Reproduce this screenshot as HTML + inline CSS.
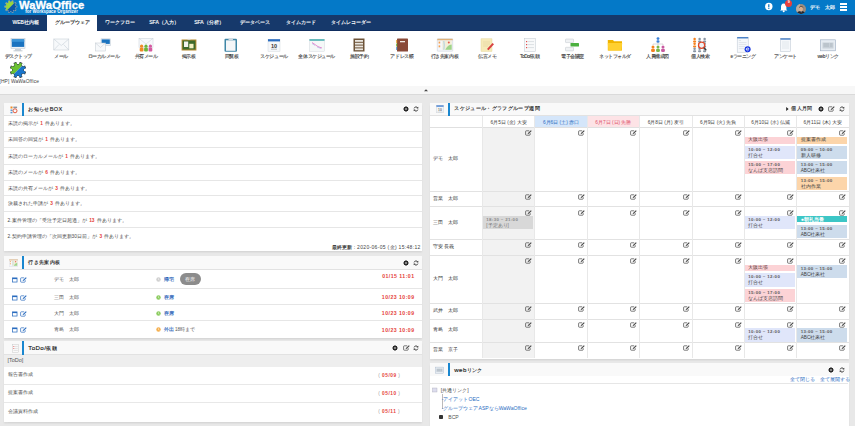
<!DOCTYPE html><html><head><meta charset="utf-8"><style>
*{margin:0;padding:0;box-sizing:border-box}
html,body{width:855px;height:426px;overflow:hidden;background:#e8e8e8;font-family:"Liberation Sans", sans-serif;color:#333}
.ab{position:absolute}
.t{position:absolute;white-space:nowrap;line-height:1}
#hdr{left:0;top:0;width:855px;height:14.8px;background:#0479c8}
#nav{left:0;top:14.8px;width:855px;height:15.9px;background:#16396b;box-shadow:inset 0 -0.9px 0 #0f2d5e}
#icons{left:0;top:30.7px;width:855px;height:55.7px;background:#fff}
#strip{left:0;top:86.4px;width:855px;height:8.2px;background:#f7f7f7;border-bottom:0.9px solid #dadada}
.panel{position:absolute;background:#fff;box-shadow:0 1.6px 1.6px rgba(0,0,0,.07)}
.ph{position:absolute;left:0;top:0;right:0;background:#f9f9f9;border-bottom:0.8px solid #e2e2e2}
.bar{position:absolute;width:2px;background:#1a87cf}
.ptitle{position:absolute;font-size:5.4px;font-weight:normal;color:#1a1a1a;-webkit-text-stroke:0.14px #1a1a1a;letter-spacing:0.35px;white-space:nowrap;line-height:1}
.row{position:absolute;left:0;right:0;border-bottom:1.1px solid #e6e6e6}
.rt{position:absolute;font-size:4.8px;color:#555;white-space:nowrap;line-height:1}
.red{color:#e5413b;font-weight:bold}
.ev{position:absolute;font-size:4.7px;color:#3a3a3a;line-height:1;overflow:hidden;white-space:nowrap}
.ev b{display:block;font-size:4.4px;font-weight:bold;color:#555;letter-spacing:0.35px}
</style></head><body>
<div id="hdr" class="ab"></div>
<svg class="ab" style="left:4px;top:-0.2px" width="14" height="13.5" viewBox="0 0 14 13.5"><defs><clipPath id="cg1"><path d="M-8,-8 L8,-8 L-8,8 Z"/></clipPath><clipPath id="cg2"><path d="M8,-8 L8,8 L-8,8 Z"/></clipPath></defs>
<g transform="translate(6.8,6.6)"><g fill="#8e9aa6" transform="scale(1.05)"><circle r="4.9"/><rect x="-0.9" y="-6.2" width="1.8" height="2.6" transform="rotate(18)"/><rect x="-0.9" y="-6.2" width="1.8" height="2.6" transform="rotate(54)"/><rect x="-0.9" y="-6.2" width="1.8" height="2.6" transform="rotate(90)"/><rect x="-0.9" y="-6.2" width="1.8" height="2.6" transform="rotate(126)"/><rect x="-0.9" y="-6.2" width="1.8" height="2.6" transform="rotate(162)"/><rect x="-0.9" y="-6.2" width="1.8" height="2.6" transform="rotate(198)"/><rect x="-0.9" y="-6.2" width="1.8" height="2.6" transform="rotate(234)"/><rect x="-0.9" y="-6.2" width="1.8" height="2.6" transform="rotate(270)"/><rect x="-0.9" y="-6.2" width="1.8" height="2.6" transform="rotate(306)"/><rect x="-0.9" y="-6.2" width="1.8" height="2.6" transform="rotate(342)"/></g><g fill="#96d63c" clip-path="url(#cg1)" transform="scale(0.9)"><circle r="4.9"/><rect x="-0.9" y="-6.2" width="1.8" height="2.6" transform="rotate(18)"/><rect x="-0.9" y="-6.2" width="1.8" height="2.6" transform="rotate(54)"/><rect x="-0.9" y="-6.2" width="1.8" height="2.6" transform="rotate(90)"/><rect x="-0.9" y="-6.2" width="1.8" height="2.6" transform="rotate(126)"/><rect x="-0.9" y="-6.2" width="1.8" height="2.6" transform="rotate(162)"/><rect x="-0.9" y="-6.2" width="1.8" height="2.6" transform="rotate(198)"/><rect x="-0.9" y="-6.2" width="1.8" height="2.6" transform="rotate(234)"/><rect x="-0.9" y="-6.2" width="1.8" height="2.6" transform="rotate(270)"/><rect x="-0.9" y="-6.2" width="1.8" height="2.6" transform="rotate(306)"/><rect x="-0.9" y="-6.2" width="1.8" height="2.6" transform="rotate(342)"/></g><g fill="#0c56a8" clip-path="url(#cg2)" transform="scale(0.9)"><circle r="4.9"/><rect x="-0.9" y="-6.2" width="1.8" height="2.6" transform="rotate(18)"/><rect x="-0.9" y="-6.2" width="1.8" height="2.6" transform="rotate(54)"/><rect x="-0.9" y="-6.2" width="1.8" height="2.6" transform="rotate(90)"/><rect x="-0.9" y="-6.2" width="1.8" height="2.6" transform="rotate(126)"/><rect x="-0.9" y="-6.2" width="1.8" height="2.6" transform="rotate(162)"/><rect x="-0.9" y="-6.2" width="1.8" height="2.6" transform="rotate(198)"/><rect x="-0.9" y="-6.2" width="1.8" height="2.6" transform="rotate(234)"/><rect x="-0.9" y="-6.2" width="1.8" height="2.6" transform="rotate(270)"/><rect x="-0.9" y="-6.2" width="1.8" height="2.6" transform="rotate(306)"/><rect x="-0.9" y="-6.2" width="1.8" height="2.6" transform="rotate(342)"/></g></g></svg>
<div class="t" style="left:19px;top:0.2px;font-size:11.2px;font-weight:bold;color:#fff;letter-spacing:0.1px;-webkit-text-stroke:0.35px #fff">WaWaOffice</div>
<div class="t" style="left:25.3px;top:9.6px;font-size:4.45px;font-weight:bold;color:#fff">for Workspace Organizer</div>
<svg class="ab" style="left:764px;top:2px" width="10" height="10" viewBox="0 0 10 10"><circle cx="4.8" cy="4.5" r="3.7" fill="#fff"/><rect x="4.2" y="2.2" width="1.2" height="3" fill="#0b72bd"/><rect x="4.2" y="5.8" width="1.2" height="1.1" fill="#0b72bd"/></svg>
<svg class="ab" style="left:779px;top:1px" width="12" height="12" viewBox="0 0 12 12"><path d="M4.7,2.5 C2.6,2.5 2,4.5 2,6 L2,8.5 L1,9.6 L8.4,9.6 L7.4,8.5 L7.4,6 C7.4,4.5 6.8,2.5 4.7,2.5 Z" fill="#fff"/><circle cx="4.7" cy="10.3" r="1" fill="#fff"/></svg>
<div class="ab" style="left:785.4px;top:-0.4px;width:7px;height:7px;border-radius:50%;background:#e8403c"></div>
<div class="t" style="left:787.8px;top:1.3px;font-size:3.8px;font-weight:bold;color:#fff">9</div>
<svg class="ab" style="left:795.6px;top:3.8px" width="10" height="10" viewBox="0 0 10 10"><defs><clipPath id="av"><circle cx="5" cy="5" r="5"/></clipPath></defs><g clip-path="url(#av)"><rect width="10" height="10" fill="#9a8c80"/><rect x="0" y="0" width="4" height="10" fill="#b8aca0"/><ellipse cx="5.1" cy="4.9" rx="1.9" ry="2.4" fill="#d8b090"/><path d="M2.9,4.6 C2.6,1.6 7.6,1.4 7.3,4.6 L6.9,3.4 C6,2.6 4.2,2.6 3.3,3.4 Z" fill="#1e1812"/><path d="M0.5,10 C1,7.6 3,7.2 5,7.3 C7,7.2 9,7.6 9.5,10 Z" fill="#22242a"/><path d="M4.5,7.3 L5.1,8.8 L5.7,7.3 Z" fill="#ddd"/></g></svg>
<div class="t" style="left:810px;top:5.3px;font-size:5.1px;color:#fff;-webkit-text-stroke:0.15px #fff">デモ</div>
<div class="t" style="left:825px;top:5.3px;font-size:5.1px;color:#fff;-webkit-text-stroke:0.15px #fff">太郎</div>
<div class="ab" style="left:840px;top:3.4px;width:7.4px;height:1.5px;background:#fff"></div>
<div class="ab" style="left:840px;top:6.2px;width:7.4px;height:1.5px;background:#fff"></div>
<div class="ab" style="left:840px;top:9px;width:7.4px;height:1.5px;background:#fff"></div>
<div id="nav" class="ab"></div>
<div class="ab" style="left:47px;top:14.6px;width:50.4px;height:17px;background:#fff"></div>
<div class="t" style="left:-14.3px;width:80px;text-align:center;top:20.4px;font-size:5px;color:#fff;-webkit-text-stroke:0.15px #fff">WEB社内報</div>
<div class="t" style="left:32px;width:80px;text-align:center;top:20.4px;font-size:5px;color:#2a2a2a;-webkit-text-stroke:0.15px #2a2a2a">グループウェア</div>
<div class="t" style="left:79.8px;width:80px;text-align:center;top:20.4px;font-size:5px;color:#fff;-webkit-text-stroke:0.15px #fff">ワークフロー</div>
<div class="t" style="left:124px;width:80px;text-align:center;top:20.4px;font-size:5px;color:#fff;-webkit-text-stroke:0.15px #fff">SFA（入力）</div>
<div class="t" style="left:168.9px;width:80px;text-align:center;top:20.4px;font-size:5px;color:#fff;-webkit-text-stroke:0.15px #fff">SFA（分析）</div>
<div class="t" style="left:215.2px;width:80px;text-align:center;top:20.4px;font-size:5px;color:#fff;-webkit-text-stroke:0.15px #fff">データベース</div>
<div class="t" style="left:261.2px;width:80px;text-align:center;top:20.4px;font-size:5px;color:#fff;-webkit-text-stroke:0.15px #fff">タイムカード</div>
<div class="t" style="left:311.4px;width:80px;text-align:center;top:20.4px;font-size:5px;color:#fff;-webkit-text-stroke:0.15px #fff">タイムレコーダー</div>
<div id="icons" class="ab"></div>
<div id="strip" class="ab"></div>
<svg class="ab" style="left:424px;top:89.2px" width="4" height="2.4" viewBox="0 0 4 2.4"><path d="M0,2.2 L2,0.2 L4,2.2 Z" fill="#444"/></svg>
<svg class="ab" style="left:10.20px;top:38px;overflow:visible" width="16" height="14" viewBox="0 0 16 14"><rect x="1" y="0.5" width="14" height="10" fill="#eef3f8" stroke="#b8c4d0" stroke-width="0.5"/><rect x="1.8" y="1.3" width="12.4" height="7.6" fill="#1a73c0"/><rect x="1.8" y="1.3" width="12.4" height="2.5" fill="#3a94d8"/><rect x="5" y="11" width="6" height="1.6" fill="#c9d2da"/><rect x="3.5" y="12.4" width="9" height="0.9" fill="#b9c2ca"/></svg>
<div class="t" style="left:-11.80px;width:60px;text-align:center;top:54.5px;font-size:4.8px;letter-spacing:-0.45px;color:#3a3a3a;-webkit-text-stroke:0.1px #3a3a3a">デスクトップ</div>
<svg class="ab" style="left:52.83px;top:38px;overflow:visible" width="16" height="14" viewBox="0 0 16 14"><rect x="0.8" y="1" width="15" height="11" fill="#f7f9fb" stroke="#c8d0d8" stroke-width="0.6"/><path d="M0.8,1 L8.3,7.5 L15.8,1 M0.8,12 L6,6.5 M15.8,12 L10.6,6.5" fill="none" stroke="#c8d0d8" stroke-width="0.6"/></svg>
<div class="t" style="left:30.83px;width:60px;text-align:center;top:54.5px;font-size:4.8px;letter-spacing:-0.45px;color:#3a3a3a;-webkit-text-stroke:0.1px #3a3a3a">メール</div>
<svg class="ab" style="left:95.46px;top:38px;overflow:visible" width="16" height="14" viewBox="0 0 16 14"><rect x="6" y="0.8" width="9.5" height="7" fill="#e8eef4" stroke="#b8c4d0" stroke-width="0.4"/><rect x="6.7" y="1.4" width="8.1" height="4.5" fill="#1a73c0"/><rect x="0.5" y="5" width="10" height="8" fill="#f7f9fb" stroke="#c0c8d0" stroke-width="0.5"/><path d="M0.5,5 L5.5,9.5 L10.5,5" fill="none" stroke="#c0c8d0" stroke-width="0.5"/></svg>
<div class="t" style="left:73.46px;width:60px;text-align:center;top:54.5px;font-size:4.8px;letter-spacing:-0.45px;color:#3a3a3a;-webkit-text-stroke:0.1px #3a3a3a">ローカルメール</div>
<svg class="ab" style="left:138.09px;top:38px;overflow:visible" width="16" height="14" viewBox="0 0 16 14"><rect x="1" y="0.3" width="14" height="9" fill="#f7f9fb" stroke="#c8d0d8" stroke-width="0.5"/><path d="M1,0.3 L8,6 L15,0.3" fill="none" stroke="#c8d0d8" stroke-width="0.5"/><circle cx="3.6" cy="8.2" r="1.6" fill="#f08a24"/><rect x="1.7" y="9.8" width="3.8" height="3.8" rx="1" fill="#f08a24"/><circle cx="8" cy="8.2" r="1.6" fill="#6cb43a"/><rect x="6.1" y="9.8" width="3.8" height="3.8" rx="1" fill="#6cb43a"/><circle cx="12.4" cy="8.2" r="1.6" fill="#d45aa0"/><rect x="10.5" y="9.8" width="3.8" height="3.8" rx="1" fill="#d45aa0"/></svg>
<div class="t" style="left:116.09px;width:60px;text-align:center;top:54.5px;font-size:4.8px;letter-spacing:-0.45px;color:#3a3a3a;-webkit-text-stroke:0.1px #3a3a3a">共有メール</div>
<svg class="ab" style="left:180.72px;top:38px;overflow:visible" width="16" height="14" viewBox="0 0 16 14"><rect x="0.6" y="1.5" width="14.8" height="11" fill="#b58a2e"/><rect x="1.6" y="2.5" width="12.8" height="9" fill="#3e6a2a"/><rect x="3" y="3.5" width="4.2" height="5.5" fill="#f4f4ee"/><rect x="8.3" y="5.8" width="4.2" height="4.5" fill="#f3f0c0"/><rect x="6.5" y="0.8" width="3" height="1" fill="#ddd"/></svg>
<div class="t" style="left:158.72px;width:60px;text-align:center;top:54.5px;font-size:4.8px;letter-spacing:-0.45px;color:#3a3a3a;-webkit-text-stroke:0.1px #3a3a3a">掲示板</div>
<svg class="ab" style="left:223.35px;top:38px;overflow:visible" width="16" height="14" viewBox="0 0 16 14"><rect x="1.5" y="0.8" width="12.5" height="13" rx="1" fill="#3f86a6"/><rect x="3" y="2.3" width="9.5" height="10.5" fill="#f4f6f8"/><rect x="5.5" y="0.3" width="4.5" height="1.8" rx="0.5" fill="#d0d8e0"/></svg>
<div class="t" style="left:201.35px;width:60px;text-align:center;top:54.5px;font-size:4.8px;letter-spacing:-0.45px;color:#3a3a3a;-webkit-text-stroke:0.1px #3a3a3a">回覧板</div>
<svg class="ab" style="left:265.98px;top:38px;overflow:visible" width="16" height="14" viewBox="0 0 16 14"><rect x="2" y="1.2" width="12" height="12" fill="#f5f7fa" stroke="#c8d0d8" stroke-width="0.4"/><rect x="2" y="1.2" width="12" height="2.2" fill="#2a6cbf"/><text x="8" y="9.6" font-size="5.5" font-weight="bold" text-anchor="middle" fill="#333" font-family="Liberation Sans">10</text><rect x="5" y="10.8" width="6" height="0.6" fill="#999"/></svg>
<div class="t" style="left:243.98px;width:60px;text-align:center;top:54.5px;font-size:4.8px;letter-spacing:-0.45px;color:#3a3a3a;-webkit-text-stroke:0.1px #3a3a3a">スケジュール</div>
<svg class="ab" style="left:308.61px;top:38px;overflow:visible" width="16" height="14" viewBox="0 0 16 14"><rect x="0.5" y="1.2" width="15" height="12" fill="#f5f8f8" stroke="#c8d0d8" stroke-width="0.4"/><rect x="0.5" y="1.2" width="15" height="1.6" fill="#4ab0b0"/><path d="M3,4.5 L6,6.5 L8,8 L10,9 L13,10" stroke="#e060c0" stroke-width="0.7" fill="none"/><path d="M3,5.5 L6,7.5 M8,9 L12,10.5" stroke="#9aa0e0" stroke-width="0.5" fill="none"/></svg>
<div class="t" style="left:286.61px;width:60px;text-align:center;top:54.5px;font-size:4.8px;letter-spacing:-0.45px;color:#3a3a3a;-webkit-text-stroke:0.1px #3a3a3a">全体スケジュール</div>
<svg class="ab" style="left:351.24px;top:38px;overflow:visible" width="16" height="14" viewBox="0 0 16 14"><rect x="2.5" y="0.5" width="11" height="13" fill="#6d5338"/><rect x="4" y="2" width="8" height="1.8" fill="#eae6e0"/><rect x="4" y="4.8" width="8" height="1.8" fill="#eae6e0"/><rect x="4" y="7.6" width="8" height="1.8" fill="#eae6e0"/><rect x="4" y="10.4" width="8" height="1.8" fill="#eae6e0"/></svg>
<div class="t" style="left:329.24px;width:60px;text-align:center;top:54.5px;font-size:4.8px;letter-spacing:-0.45px;color:#3a3a3a;-webkit-text-stroke:0.1px #3a3a3a">施設予約</div>
<svg class="ab" style="left:393.87px;top:38px;overflow:visible" width="16" height="14" viewBox="0 0 16 14"><rect x="3" y="0.6" width="11" height="13" rx="0.6" fill="#8a4a38"/><rect x="2.2" y="2" width="1" height="3" fill="#e8a030"/><rect x="2.2" y="5.5" width="1" height="3" fill="#6cb43a"/><rect x="2.2" y="9" width="1" height="3" fill="#4a90d0"/><rect x="6" y="3" width="5" height="1.3" fill="#f0e8e0"/></svg>
<div class="t" style="left:371.87px;width:60px;text-align:center;top:54.5px;font-size:4.8px;letter-spacing:-0.45px;color:#3a3a3a;-webkit-text-stroke:0.1px #3a3a3a">アドレス帳</div>
<svg class="ab" style="left:436.50px;top:38px;overflow:visible" width="16" height="14" viewBox="0 0 16 14"><rect x="0.3" y="0.8" width="15.4" height="12.4" rx="0.4" fill="#f4f6fa" stroke="#c4ccd8" stroke-width="0.5"/><rect x="0.3" y="0.8" width="15.4" height="1.5" fill="#e0b27a"/><rect x="1.6" y="3.6" width="1.6" height="1.9" fill="#f5a050"/><rect x="1.6" y="7.4" width="1.6" height="1.9" fill="#f5a050"/><rect x="5.3" y="3" width="9.4" height="8.8" fill="#f3eed8"/><path d="M8.2,11.8 Q10.5,7.2 14.7,6.6 L14.7,11.8 Z" fill="#9fd48a"/><path d="M6.8,3 L7.2,7 L6.9,11.8" stroke="#8cc0e8" stroke-width="0.7" fill="none"/><circle cx="11.8" cy="4.6" r="1" fill="#e85a4a"/></svg>
<div class="t" style="left:414.50px;width:60px;text-align:center;top:54.5px;font-size:4.8px;letter-spacing:-0.45px;color:#3a3a3a;-webkit-text-stroke:0.1px #3a3a3a">行き先案内板</div>
<svg class="ab" style="left:479.13px;top:38px;overflow:visible" width="16" height="14" viewBox="0 0 16 14"><rect x="2" y="0.8" width="11" height="12.6" fill="#f6eab8" stroke="#e0d090" stroke-width="0.4"/><path d="M4,4 L11,4 M4,6 L11,6 M4,8 L9,8" stroke="#d8c890" stroke-width="0.4"/><path d="M8,11 L13.5,5 L15,6.3 L9.5,12.3 Z" fill="#d84040"/></svg>
<div class="t" style="left:457.13px;width:60px;text-align:center;top:54.5px;font-size:4.8px;letter-spacing:-0.45px;color:#3a3a3a;-webkit-text-stroke:0.1px #3a3a3a">伝言メモ</div>
<svg class="ab" style="left:521.76px;top:38px;overflow:visible" width="16" height="14" viewBox="0 0 16 14"><rect x="2.5" y="0.6" width="11" height="13" fill="#f8f9fa" stroke="#c0c8d0" stroke-width="0.5"/><rect x="4" y="3" width="1.2" height="1.2" fill="#e05050"/><rect x="4" y="6" width="1.2" height="1.2" fill="#e05050"/><rect x="4" y="9" width="1.2" height="1.2" fill="#e05050"/><path d="M6,3.6 L12,3.6 M6,6.6 L12,6.6 M6,9.6 L12,9.6" stroke="#b0b8c0" stroke-width="0.4"/></svg>
<div class="t" style="left:499.76px;width:60px;text-align:center;top:54.5px;font-size:4.8px;letter-spacing:-0.45px;color:#3a3a3a;-webkit-text-stroke:0.1px #3a3a3a">ToDo/依頼</div>
<svg class="ab" style="left:564.39px;top:38px;overflow:visible" width="16" height="14" viewBox="0 0 16 14"><rect x="1.5" y="1" width="8" height="3.6" rx="0.6" fill="#f0f2f4" stroke="#b0b8c0" stroke-width="0.4"/><rect x="6.5" y="5" width="8.5" height="3.6" rx="0.6" fill="#4cb040"/><rect x="1.5" y="9.3" width="8" height="3.6" rx="0.6" fill="#f0f2f4" stroke="#b0b8c0" stroke-width="0.4"/></svg>
<div class="t" style="left:542.39px;width:60px;text-align:center;top:54.5px;font-size:4.8px;letter-spacing:-0.45px;color:#3a3a3a;-webkit-text-stroke:0.1px #3a3a3a">電子会議室</div>
<svg class="ab" style="left:607.02px;top:38px;overflow:visible" width="16" height="14" viewBox="0 0 16 14"><path d="M0.8,2 L6,2 L7,3.2 L15,3.2 L15,12.5 L0.8,12.5 Z" fill="#f0b400"/><path d="M0.8,5 L15.2,5 L14.5,12.5 L1.3,12.5 Z" fill="#ffd030"/></svg>
<div class="t" style="left:585.02px;width:60px;text-align:center;top:54.5px;font-size:4.8px;letter-spacing:-0.45px;color:#3a3a3a;-webkit-text-stroke:0.1px #3a3a3a">ネットフォルダ</div>
<svg class="ab" style="left:649.65px;top:38px;overflow:visible" width="16" height="14" viewBox="0 0 16 14"><circle cx="8" cy="0.5999999999999999" r="1.4" fill="#3a80d8"/><rect x="6.5" y="2.3" width="3.0" height="2.4" rx="1.05" fill="#3a80d8"/><path d="M8,4.4 L8,6 M3,6 L13,6 M3,6 L3,7 M8,6 L8,7 M13,6 L13,7" stroke="#aaa" stroke-width="0.4" fill="none"/><circle cx="3" cy="8.9" r="1.5" fill="#f5821f"/><rect x="1.1" y="10.700000000000001" width="3.8" height="3.4" rx="1.33" fill="#f5821f"/><circle cx="8" cy="8.9" r="1.5" fill="#7ab648"/><rect x="6.1" y="10.700000000000001" width="3.8" height="3.4" rx="1.33" fill="#7ab648"/><circle cx="13" cy="8.9" r="1.5" fill="#c85aa0"/><rect x="11.1" y="10.700000000000001" width="3.8" height="3.4" rx="1.33" fill="#c85aa0"/></svg>
<div class="t" style="left:627.65px;width:60px;text-align:center;top:54.5px;font-size:4.8px;letter-spacing:-0.45px;color:#3a3a3a;-webkit-text-stroke:0.1px #3a3a3a">人員構成図</div>
<svg class="ab" style="left:692.28px;top:38px;overflow:visible" width="16" height="14" viewBox="0 0 16 14"><circle cx="2.6" cy="1.05" r="1.25" fill="#f5821f"/><rect x="1.0" y="2.5999999999999996" width="3.2" height="2.0" rx="1.12" fill="#f5821f"/><circle cx="7.6" cy="1.05" r="1.25" fill="#8a96a4"/><rect x="6.0" y="2.5999999999999996" width="3.2" height="2.0" rx="1.12" fill="#8a96a4"/><circle cx="12.6" cy="1.05" r="1.25" fill="#8a96a4"/><rect x="11.0" y="2.5999999999999996" width="3.2" height="2.0" rx="1.12" fill="#8a96a4"/><circle cx="2.6" cy="5.85" r="1.25" fill="#f5821f"/><rect x="1.0" y="7.3999999999999995" width="3.2" height="2.0" rx="1.12" fill="#f5821f"/><circle cx="7.6" cy="5.85" r="1.25" fill="#8a96a4"/><rect x="6.0" y="7.3999999999999995" width="3.2" height="2.0" rx="1.12" fill="#8a96a4"/><circle cx="12.6" cy="5.85" r="1.25" fill="#8a96a4"/><rect x="11.0" y="7.3999999999999995" width="3.2" height="2.0" rx="1.12" fill="#8a96a4"/><circle cx="2.6" cy="10.65" r="1.25" fill="#8a96a4"/><rect x="1.0" y="12.200000000000001" width="3.2" height="2.0" rx="1.12" fill="#8a96a4"/><circle cx="7.6" cy="10.65" r="1.25" fill="#8a96a4"/><rect x="6.0" y="12.200000000000001" width="3.2" height="2.0" rx="1.12" fill="#8a96a4"/><circle cx="12.6" cy="10.65" r="1.25" fill="#8a96a4"/><rect x="11.0" y="12.200000000000001" width="3.2" height="2.0" rx="1.12" fill="#8a96a4"/><circle cx="9.6" cy="7.2" r="3.1" fill="#eef2f5" stroke="#e04a2a" stroke-width="1.3"/><path d="M11.8,9.6 L14.3,12.3" stroke="#3a3a3a" stroke-width="1.3"/></svg>
<div class="t" style="left:670.28px;width:60px;text-align:center;top:54.5px;font-size:4.8px;letter-spacing:-0.45px;color:#3a3a3a;-webkit-text-stroke:0.1px #3a3a3a">個人検索</div>
<svg class="ab" style="left:734.91px;top:38px;overflow:visible" width="16" height="14" viewBox="0 0 16 14"><rect x="2.2" y="-0.8" width="11" height="15" fill="#f6f8fb" stroke="#b8c4d0" stroke-width="0.5"/><rect x="2.2" y="-0.8" width="11" height="1.2" fill="#2a6cbf"/><path d="M3.8,2.5 L6,2.5 M3.8,4.6 L11.5,4.6 M3.8,6.6 L11.5,6.6 M3.8,8.6 L10,8.6 M3.8,10.6 L9,10.6" stroke="#c0c8d0" stroke-width="0.4"/><circle cx="12.6" cy="11.2" r="3" fill="#1030e0"/><path d="M11.2,11.2 L14,11.2 A1.4,1.4 0 1 0 13.6,12.3" fill="none" stroke="#fff" stroke-width="0.7"/></svg>
<div class="t" style="left:712.91px;width:60px;text-align:center;top:54.5px;font-size:4.8px;letter-spacing:-0.45px;color:#3a3a3a;-webkit-text-stroke:0.1px #3a3a3a">eラーニング</div>
<svg class="ab" style="left:777.54px;top:38px;overflow:visible" width="16" height="14" viewBox="0 0 16 14"><rect x="2.5" y="0.4" width="10" height="13.2" fill="#f6f8fb" stroke="#b8c4d0" stroke-width="0.5"/><rect x="2.5" y="0.4" width="10" height="1.2" fill="#2a6cbf"/><path d="M4,4 L11,4 M4,6 L11,6 M4,8 L11,8 M4,10 L11,10" stroke="#c8d0d8" stroke-width="0.4"/></svg>
<div class="t" style="left:755.54px;width:60px;text-align:center;top:54.5px;font-size:4.8px;letter-spacing:-0.45px;color:#3a3a3a;-webkit-text-stroke:0.1px #3a3a3a">アンケート</div>
<svg class="ab" style="left:820.17px;top:38px;overflow:visible" width="16" height="14" viewBox="0 0 16 14"><rect x="0.5" y="1.8" width="15" height="11" fill="#e6ecf2" stroke="#9aabc0" stroke-width="0.6"/><rect x="2.5" y="4.5" width="11" height="6" fill="#c8d0d8"/><path d="M3.5,6 L9,6 M3.5,8 L9,8 M10,6 L12.5,6 M10,8 L12.5,8" stroke="#a0aab4" stroke-width="0.6"/></svg>
<div class="t" style="left:798.17px;width:60px;text-align:center;top:54.5px;font-size:4.8px;letter-spacing:-0.45px;color:#3a3a3a;-webkit-text-stroke:0.1px #3a3a3a">webリンク</div>
<svg class="ab" style="left:10.2px;top:62.2px" width="16" height="16" viewBox="0 0 16 16"><defs><clipPath id="cg3"><path d="M-9,-9 L9,-9 L-9,9 Z"/></clipPath><clipPath id="cg4"><path d="M9,-9 L9,9 L-9,9 Z"/></clipPath></defs><g transform="translate(8,8)"><g fill="#3a4448" transform="scale(1.06)"><circle r="5.7"/><rect x="-1.4" y="-7.8" width="2.8" height="4" transform="rotate(22.5)"/><rect x="-1.4" y="-7.8" width="2.8" height="4" transform="rotate(67.5)"/><rect x="-1.4" y="-7.8" width="2.8" height="4" transform="rotate(112.5)"/><rect x="-1.4" y="-7.8" width="2.8" height="4" transform="rotate(157.5)"/><rect x="-1.4" y="-7.8" width="2.8" height="4" transform="rotate(202.5)"/><rect x="-1.4" y="-7.8" width="2.8" height="4" transform="rotate(247.5)"/><rect x="-1.4" y="-7.8" width="2.8" height="4" transform="rotate(292.5)"/><rect x="-1.4" y="-7.8" width="2.8" height="4" transform="rotate(337.5)"/></g><g fill="#6cc232" clip-path="url(#cg3)" transform="scale(0.94)"><circle r="5.7"/><rect x="-1.4" y="-7.8" width="2.8" height="4" transform="rotate(22.5)"/><rect x="-1.4" y="-7.8" width="2.8" height="4" transform="rotate(67.5)"/><rect x="-1.4" y="-7.8" width="2.8" height="4" transform="rotate(112.5)"/><rect x="-1.4" y="-7.8" width="2.8" height="4" transform="rotate(157.5)"/><rect x="-1.4" y="-7.8" width="2.8" height="4" transform="rotate(202.5)"/><rect x="-1.4" y="-7.8" width="2.8" height="4" transform="rotate(247.5)"/><rect x="-1.4" y="-7.8" width="2.8" height="4" transform="rotate(292.5)"/><rect x="-1.4" y="-7.8" width="2.8" height="4" transform="rotate(337.5)"/></g><g fill="#1a76cc" clip-path="url(#cg4)" transform="scale(0.94)"><circle r="5.7"/><rect x="-1.4" y="-7.8" width="2.8" height="4" transform="rotate(22.5)"/><rect x="-1.4" y="-7.8" width="2.8" height="4" transform="rotate(67.5)"/><rect x="-1.4" y="-7.8" width="2.8" height="4" transform="rotate(112.5)"/><rect x="-1.4" y="-7.8" width="2.8" height="4" transform="rotate(157.5)"/><rect x="-1.4" y="-7.8" width="2.8" height="4" transform="rotate(202.5)"/><rect x="-1.4" y="-7.8" width="2.8" height="4" transform="rotate(247.5)"/><rect x="-1.4" y="-7.8" width="2.8" height="4" transform="rotate(292.5)"/><rect x="-1.4" y="-7.8" width="2.8" height="4" transform="rotate(337.5)"/></g><path d="M-5.5,5.5 L6.5,-6.5" stroke="#9fd0f0" stroke-width="0.4"/></g></svg>
<div class="t" style="left:-0.6px;top:79.6px;font-size:4.9px;color:#444;letter-spacing:0.12px">[HP] WaWaOffice</div>
<div class="panel" style="left:3.5px;top:103px;width:418px;height:148.3px">
<div class="ph" style="height:12.5px"></div>
<div class="bar" style="left:18.2px;top:0;height:12.8px"></div>
<svg class="ab" style="left:6px;top:2.5px" width="8" height="8" viewBox="0 0 8 8"><rect x="0.5" y="0.5" width="2" height="2" fill="#f08a24"/><rect x="0.5" y="3.5" width="2" height="1.5" fill="#5a9ad0"/><rect x="0.5" y="5.8" width="2" height="1.5" fill="#5a9ad0"/><rect x="3.3" y="0.6" width="3.8" height="1.6" fill="#8a96a4"/><circle cx="5" cy="4.8" r="2" fill="none" stroke="#e04a2a" stroke-width="0.9"/></svg>
<div class="ptitle" style="left:24.8px;top:3.6px">お知らせ<span style="font-size:5.6px">BOX</span></div>
<svg class="ab" style="left:399px;top:3.3px" width="6" height="6" viewBox="0 0 6 6"><path d="M2.74,0.31 L3.26,0.31 L3.65,0.85 L4.06,1.02 L4.71,0.91 L5.09,1.29 L4.98,1.94 L5.15,2.35 L5.69,2.74 L5.69,3.26 L5.15,3.65 L4.98,4.06 L5.09,4.71 L4.71,5.09 L4.06,4.98 L3.65,5.15 L3.26,5.69 L2.74,5.69 L2.35,5.15 L1.94,4.98 L1.29,5.09 L0.91,4.71 L1.02,4.06 L0.85,3.65 L0.31,3.26 L0.31,2.74 L0.85,2.35 L1.02,1.94 L0.91,1.29 L1.29,0.91 L1.94,1.02 L2.35,0.85 Z" fill="#2a2a2a"/><circle cx="3" cy="3" r="2.2" fill="#2a2a2a"/><circle cx="3" cy="3" r="0.8" fill="#fafafa"/></svg>
<svg class="ab" style="left:409.5px;top:3.3px" width="6" height="6" viewBox="0 0 6 6"><path d="M4.8,2 A2,2 0 0 0 1.1,2.4 M1.2,4 A2,2 0 0 0 4.9,3.6" fill="none" stroke="#333" stroke-width="0.9"/><path d="M5.3,0.8 L5.3,2.6 L3.5,2.6 Z M0.7,5.2 L0.7,3.4 L2.5,3.4 Z" fill="#333"/></svg>
<div class="row" style="top:12.5px;height:16.25px"></div>
<div class="rt" style="left:4px;top:19.12px;color:#4a4a4a">未読の掲示が <span class="red" style="margin-left:1.3px;margin-right:0.8px">1</span> 件あります。</div>
<div class="row" style="top:28.75px;height:16.5px"></div>
<div class="rt" style="left:4px;top:35.38px;color:#4a4a4a">未回答の回覧が <span class="red" style="margin-left:1.3px;margin-right:0.8px">1</span> 件あります。</div>
<div class="row" style="top:45.25px;height:16.25px"></div>
<div class="rt" style="left:4px;top:51.88px;color:#4a4a4a">未読のローカルメールが <span class="red" style="margin-left:1.3px;margin-right:0.8px">1</span> 件あります。</div>
<div class="row" style="top:61.5px;height:16.25px"></div>
<div class="rt" style="left:4px;top:68.12px;color:#4a4a4a">未読のメールが <span class="red" style="margin-left:1.3px;margin-right:0.8px">6</span> 件あります。</div>
<div class="row" style="top:77.75px;height:15.0px"></div>
<div class="rt" style="left:4px;top:84.38px;color:#4a4a4a">未読の共有メールが <span class="red" style="margin-left:1.3px;margin-right:0.8px">3</span> 件あります。</div>
<div class="row" style="top:92.75px;height:16.25px"></div>
<div class="rt" style="left:4px;top:99.38px;color:#4a4a4a">決裁された申請が <span class="red" style="margin-left:1.3px;margin-right:0.8px">3</span> 件あります。</div>
<div class="row" style="top:109px;height:16.25px"></div>
<div class="rt" style="left:4px;top:115.62px;color:#4a4a4a">2.案件管理の「受注予定日超過」が <span class="red" style="margin-left:1.3px;margin-right:0.8px">13</span> 件あります。</div>
<div class="rt" style="left:4px;top:131.88px;color:#4a4a4a">2.契約申請管理の「次回更新30日前」が <span class="red" style="margin-left:1.3px;margin-right:0.8px">3</span> 件あります。</div>
<div class="rt" style="right:0.9px;top:142px;font-size:5px;color:#444;letter-spacing:0.32px"><b style="letter-spacing:0">最終更新</b>：2020-06-05 (金) 15:48:12</div>
</div>
<div class="panel" style="left:3.5px;top:255.5px;width:418px;height:82px">
<div class="ph" style="height:14px"></div>
<div class="bar" style="left:18.2px;top:0;height:13.8px"></div>
<svg class="ab" style="left:5.5px;top:3px" width="9" height="8" viewBox="0 0 16 14"><rect x="0.3" y="0.8" width="15.4" height="12.4" rx="0.4" fill="#f4f6fa" stroke="#c4ccd8" stroke-width="0.5"/><rect x="0.3" y="0.8" width="15.4" height="1.5" fill="#e0b27a"/><rect x="1.6" y="3.6" width="1.6" height="1.9" fill="#f5a050"/><rect x="1.6" y="7.4" width="1.6" height="1.9" fill="#f5a050"/><rect x="5.3" y="3" width="9.4" height="8.8" fill="#f3eed8"/><path d="M8.2,11.8 Q10.5,7.2 14.7,6.6 L14.7,11.8 Z" fill="#9fd48a"/><path d="M6.8,3 L7.2,7 L6.9,11.8" stroke="#8cc0e8" stroke-width="0.7" fill="none"/><circle cx="11.8" cy="4.6" r="1" fill="#e85a4a"/></svg>
<div class="ptitle" style="left:24.8px;top:4.3px">行き先案内板</div>
<svg class="ab" style="left:399px;top:4px" width="6" height="6" viewBox="0 0 6 6"><path d="M2.74,0.31 L3.26,0.31 L3.65,0.85 L4.06,1.02 L4.71,0.91 L5.09,1.29 L4.98,1.94 L5.15,2.35 L5.69,2.74 L5.69,3.26 L5.15,3.65 L4.98,4.06 L5.09,4.71 L4.71,5.09 L4.06,4.98 L3.65,5.15 L3.26,5.69 L2.74,5.69 L2.35,5.15 L1.94,4.98 L1.29,5.09 L0.91,4.71 L1.02,4.06 L0.85,3.65 L0.31,3.26 L0.31,2.74 L0.85,2.35 L1.02,1.94 L0.91,1.29 L1.29,0.91 L1.94,1.02 L2.35,0.85 Z" fill="#2a2a2a"/><circle cx="3" cy="3" r="2.2" fill="#2a2a2a"/><circle cx="3" cy="3" r="0.8" fill="#fafafa"/></svg>
<svg class="ab" style="left:409.5px;top:4px" width="6" height="6" viewBox="0 0 6 6"><path d="M4.8,2 A2,2 0 0 0 1.1,2.4 M1.2,4 A2,2 0 0 0 4.9,3.6" fill="none" stroke="#333" stroke-width="0.9"/><path d="M5.3,0.8 L5.3,2.6 L3.5,2.6 Z M0.7,5.2 L0.7,3.4 L2.5,3.4 Z" fill="#333"/></svg>
<div class="row" style="top:14px;height:19.75px"></div>
<svg class="ab" style="left:8.5px;top:21.88px" width="5.5" height="5.5" viewBox="0 0 6 6"><rect x="0.5" y="1" width="5" height="4.5" fill="none" stroke="#2a6cbf" stroke-width="0.8"/><rect x="0.5" y="1" width="5" height="1.3" fill="#2a6cbf"/></svg>
<svg class="ab" style="left:16.5px;top:21.675px" width="7" height="6" viewBox="0 0 7 6"><path d="M4.2,0.8 L1.3,0.8 Q0.6,0.8 0.6,1.5 L0.6,4.5 Q0.6,5.2 1.3,5.2 L4.5,5.2 Q5.2,5.2 5.2,4.5 L5.2,3.2" fill="none" stroke="#2a6cbf" stroke-width="0.7"/><path d="M2.6,4.1 L3,3 L5.9,0.3 L6.7,1.1 L3.8,3.8 Z" fill="#2a6cbf"/></svg>
<div class="rt" style="left:50.3px;top:22.38px;color:#555">デモ　太郎</div>
<svg class="ab" style="left:152px;top:21.48px" width="5" height="5" viewBox="0 0 5 5"><circle cx="2.5" cy="2.5" r="2.2" fill="#d0d0d0"/><path d="M2.5,1.3 L2.5,2.6 L3.4,3.2" stroke="#fff" stroke-width="0.5" fill="none"/></svg>
<div class="rt" style="left:160.3px;top:22.38px;color:#2a62b8;-webkit-text-stroke:0.15px #2a62b8">帰宅</div>
<div class="ab" style="left:176px;top:17.75px;width:21px;height:11.75px;border-radius:6px;background:#8c8c8c"></div>
<div class="rt" style="left:181.6px;top:22.38px;color:#fff">在席</div>
<div class="rt red" style="right:7px;top:18.68px;font-size:5.2px;letter-spacing:0.45px">01/15 11:01</div>
<div class="row" style="top:33.75px;height:15.75px"></div>
<svg class="ab" style="left:8.5px;top:39.62px" width="5.5" height="5.5" viewBox="0 0 6 6"><rect x="0.5" y="1" width="5" height="4.5" fill="none" stroke="#2a6cbf" stroke-width="0.8"/><rect x="0.5" y="1" width="5" height="1.3" fill="#2a6cbf"/></svg>
<svg class="ab" style="left:16.5px;top:39.425px" width="7" height="6" viewBox="0 0 7 6"><path d="M4.2,0.8 L1.3,0.8 Q0.6,0.8 0.6,1.5 L0.6,4.5 Q0.6,5.2 1.3,5.2 L4.5,5.2 Q5.2,5.2 5.2,4.5 L5.2,3.2" fill="none" stroke="#2a6cbf" stroke-width="0.7"/><path d="M2.6,4.1 L3,3 L5.9,0.3 L6.7,1.1 L3.8,3.8 Z" fill="#2a6cbf"/></svg>
<div class="rt" style="left:50.3px;top:40.12px;color:#555">三田　太郎</div>
<svg class="ab" style="left:152px;top:39.23px" width="5" height="5" viewBox="0 0 5 5"><circle cx="2.5" cy="2.5" r="2.2" fill="#8ccc60"/><path d="M2.5,1.3 L2.5,2.6 L3.4,3.2" stroke="#fff" stroke-width="0.5" fill="none"/></svg>
<div class="rt" style="left:160.3px;top:40.12px;color:#2a62b8;-webkit-text-stroke:0.15px #2a62b8">在席</div>
<div class="rt red" style="right:7px;top:39.92px;font-size:5.2px;letter-spacing:0.45px">10/23 10:09</div>
<div class="row" style="top:49.5px;height:16.25px"></div>
<svg class="ab" style="left:8.5px;top:55.62px" width="5.5" height="5.5" viewBox="0 0 6 6"><rect x="0.5" y="1" width="5" height="4.5" fill="none" stroke="#2a6cbf" stroke-width="0.8"/><rect x="0.5" y="1" width="5" height="1.3" fill="#2a6cbf"/></svg>
<svg class="ab" style="left:16.5px;top:55.425px" width="7" height="6" viewBox="0 0 7 6"><path d="M4.2,0.8 L1.3,0.8 Q0.6,0.8 0.6,1.5 L0.6,4.5 Q0.6,5.2 1.3,5.2 L4.5,5.2 Q5.2,5.2 5.2,4.5 L5.2,3.2" fill="none" stroke="#2a6cbf" stroke-width="0.7"/><path d="M2.6,4.1 L3,3 L5.9,0.3 L6.7,1.1 L3.8,3.8 Z" fill="#2a6cbf"/></svg>
<div class="rt" style="left:50.3px;top:56.12px;color:#555">大門　太郎</div>
<svg class="ab" style="left:152px;top:55.23px" width="5" height="5" viewBox="0 0 5 5"><circle cx="2.5" cy="2.5" r="2.2" fill="#8ccc60"/><path d="M2.5,1.3 L2.5,2.6 L3.4,3.2" stroke="#fff" stroke-width="0.5" fill="none"/></svg>
<div class="rt" style="left:160.3px;top:56.12px;color:#2a62b8;-webkit-text-stroke:0.15px #2a62b8">在席</div>
<div class="rt red" style="right:7px;top:55.92px;font-size:5.2px;letter-spacing:0.45px">10/23 10:09</div>
<svg class="ab" style="left:8.5px;top:71.88px" width="5.5" height="5.5" viewBox="0 0 6 6"><rect x="0.5" y="1" width="5" height="4.5" fill="none" stroke="#2a6cbf" stroke-width="0.8"/><rect x="0.5" y="1" width="5" height="1.3" fill="#2a6cbf"/></svg>
<svg class="ab" style="left:16.5px;top:71.675px" width="7" height="6" viewBox="0 0 7 6"><path d="M4.2,0.8 L1.3,0.8 Q0.6,0.8 0.6,1.5 L0.6,4.5 Q0.6,5.2 1.3,5.2 L4.5,5.2 Q5.2,5.2 5.2,4.5 L5.2,3.2" fill="none" stroke="#2a6cbf" stroke-width="0.7"/><path d="M2.6,4.1 L3,3 L5.9,0.3 L6.7,1.1 L3.8,3.8 Z" fill="#2a6cbf"/></svg>
<div class="rt" style="left:50.3px;top:72.38px;color:#555">青島　太郎</div>
<svg class="ab" style="left:152px;top:71.47px" width="5" height="5" viewBox="0 0 5 5"><circle cx="2.5" cy="2.5" r="2.2" fill="#f5b050"/><path d="M2.5,1.3 L2.5,2.6 L3.4,3.2" stroke="#fff" stroke-width="0.5" fill="none"/></svg>
<div class="rt" style="left:160.3px;top:72.38px;color:#2a62b8;-webkit-text-stroke:0.15px #2a62b8">外出</div>
<div class="rt" style="left:171.5px;top:72.38px;color:#555;font-size:4.6px">18時まで</div>
<div class="rt red" style="right:7px;top:72.17px;font-size:5.2px;letter-spacing:0.45px">10/23 10:09</div>
</div>
<div class="panel" style="left:3.5px;top:341.3px;width:418px;height:80.4px">
<div class="ph" style="height:14.1px"></div>
<div class="bar" style="left:18.2px;top:0;height:13.8px"></div>
<svg class="ab" style="left:8px;top:2.5px" width="7" height="9" viewBox="0 0 7 9"><rect x="0.5" y="0.5" width="6" height="8" fill="#fafafa" stroke="#c0c0c0" stroke-width="0.4"/><rect x="1.3" y="2" width="1" height="0.8" fill="#e05050"/><rect x="1.3" y="4" width="1" height="0.8" fill="#e05050"/><path d="M2.8,2.4 L5.8,2.4 M2.8,4.4 L5.8,4.4 M1.5,6.4 L5.8,6.4" stroke="#bbb" stroke-width="0.4"/></svg>
<div class="ptitle" style="left:24.8px;top:4.2px"><span style="font-size:6.2px">ToDo/</span>依頼</div>
<svg class="ab" style="left:388px;top:4.2px" width="6" height="6" viewBox="0 0 6 6"><path d="M2.74,0.31 L3.26,0.31 L3.65,0.85 L4.06,1.02 L4.71,0.91 L5.09,1.29 L4.98,1.94 L5.15,2.35 L5.69,2.74 L5.69,3.26 L5.15,3.65 L4.98,4.06 L5.09,4.71 L4.71,5.09 L4.06,4.98 L3.65,5.15 L3.26,5.69 L2.74,5.69 L2.35,5.15 L1.94,4.98 L1.29,5.09 L0.91,4.71 L1.02,4.06 L0.85,3.65 L0.31,3.26 L0.31,2.74 L0.85,2.35 L1.02,1.94 L0.91,1.29 L1.29,0.91 L1.94,1.02 L2.35,0.85 Z" fill="#2a2a2a"/><circle cx="3" cy="3" r="2.2" fill="#2a2a2a"/><circle cx="3" cy="3" r="0.8" fill="#fafafa"/></svg>
<svg class="ab" style="left:399px;top:4px" width="7" height="6" viewBox="0 0 7 6"><path d="M4.2,0.8 L1.3,0.8 Q0.6,0.8 0.6,1.5 L0.6,4.5 Q0.6,5.2 1.3,5.2 L4.5,5.2 Q5.2,5.2 5.2,4.5 L5.2,3.2" fill="none" stroke="#444" stroke-width="0.7"/><path d="M2.6,4.1 L3,3 L5.9,0.3 L6.7,1.1 L3.8,3.8 Z" fill="#444"/></svg>
<svg class="ab" style="left:409.5px;top:4.2px" width="6" height="6" viewBox="0 0 6 6"><path d="M4.8,2 A2,2 0 0 0 1.1,2.4 M1.2,4 A2,2 0 0 0 4.9,3.6" fill="none" stroke="#333" stroke-width="0.9"/><path d="M5.3,0.8 L5.3,2.6 L3.5,2.6 Z M0.7,5.2 L0.7,3.4 L2.5,3.4 Z" fill="#333"/></svg>
<div class="ab" style="left:0;top:14.1px;width:418px;height:11.5px;background:#eeeeee"></div>
<div class="rt" style="left:4px;top:16.8px;color:#555;font-size:5.5px">[ToDo]</div>
<div class="row" style="top:25.6px;height:18.1px;border-bottom:1.2px solid #e8e8e8"></div>
<div class="rt" style="left:4px;top:31.95px;color:#555">報告書作成</div>
<div class="rt" style="left:374.8px;top:32.55px;color:#999">(<span class="red" style="letter-spacing:0.5px;margin:0 1.6px 0 2.2px">05/09</span>)</div>
<div class="row" style="top:43.7px;height:18.099999999999994px;border-bottom:1.2px solid #e8e8e8"></div>
<div class="rt" style="left:4px;top:50.05px;color:#555">提案書作成</div>
<div class="rt" style="left:374.8px;top:50.65px;color:#999">(<span class="red" style="letter-spacing:0.5px;margin:0 1.6px 0 2.2px">05/10</span>)</div>
<div class="rt" style="left:4px;top:68.40px;color:#555">会議資料作成</div>
<div class="rt" style="left:374.8px;top:69.00px;color:#999">(<span class="red" style="letter-spacing:0.5px;margin:0 1.6px 0 2.2px">05/11</span>)</div>
</div>
<div class="panel" style="left:429.7px;top:102.5px;width:419.3px;height:256px">
<div class="ph" style="height:13px"></div>
<div class="bar" style="left:18.8px;top:0;height:13.2px"></div>
<svg class="ab" style="left:6.3px;top:2.4px" width="8" height="8.5" viewBox="0 0 8 8.5"><rect x="0.4" y="0.4" width="7.2" height="7.6" fill="#f3f5f8" stroke="#c0c8d0" stroke-width="0.4"/><rect x="0.4" y="0.4" width="7.2" height="1.3" fill="#3a7ad0"/><text x="4" y="5.6" font-size="3.4" font-weight="bold" text-anchor="middle" fill="#777" font-family="Liberation Sans">10</text><rect x="1.5" y="6.8" width="5" height="0.5" fill="#bbb"/></svg>
<div class="ptitle" style="left:24.6px;top:3.8px">スケジュール・グラフグループ週間</div>
<svg class="ab" style="left:356.8px;top:4.6px" width="3" height="4" viewBox="0 0 3 4"><path d="M0.2,0.1 L2.6,2 L0.2,3.9 Z" fill="#222"/></svg>
<div class="ptitle" style="left:361.5px;top:3.9px;font-weight:normal;color:#222;-webkit-text-stroke:0.1px #222">個人月間</div>
<svg class="ab" style="left:388.2px;top:3.4px" width="6" height="6" viewBox="0 0 6 6"><path d="M2.74,0.31 L3.26,0.31 L3.65,0.85 L4.06,1.02 L4.71,0.91 L5.09,1.29 L4.98,1.94 L5.15,2.35 L5.69,2.74 L5.69,3.26 L5.15,3.65 L4.98,4.06 L5.09,4.71 L4.71,5.09 L4.06,4.98 L3.65,5.15 L3.26,5.69 L2.74,5.69 L2.35,5.15 L1.94,4.98 L1.29,5.09 L0.91,4.71 L1.02,4.06 L0.85,3.65 L0.31,3.26 L0.31,2.74 L0.85,2.35 L1.02,1.94 L0.91,1.29 L1.29,0.91 L1.94,1.02 L2.35,0.85 Z" fill="#2a2a2a"/><circle cx="3" cy="3" r="2.2" fill="#2a2a2a"/><circle cx="3" cy="3" r="0.8" fill="#fafafa"/></svg>
<svg class="ab" style="left:398.8px;top:3.3px" width="7" height="6" viewBox="0 0 7 6"><path d="M4.2,0.8 L1.3,0.8 Q0.6,0.8 0.6,1.5 L0.6,4.5 Q0.6,5.2 1.3,5.2 L4.5,5.2 Q5.2,5.2 5.2,4.5 L5.2,3.2" fill="none" stroke="#444" stroke-width="0.7"/><path d="M2.6,4.1 L3,3 L5.9,0.3 L6.7,1.1 L3.8,3.8 Z" fill="#444"/></svg>
<svg class="ab" style="left:409.6px;top:3.4px" width="6" height="6" viewBox="0 0 6 6"><path d="M4.8,2 A2,2 0 0 0 1.1,2.4 M1.2,4 A2,2 0 0 0 4.9,3.6" fill="none" stroke="#333" stroke-width="0.9"/><path d="M5.3,0.8 L5.3,2.6 L3.5,2.6 Z M0.7,5.2 L0.7,3.4 L2.5,3.4 Z" fill="#333"/></svg>
<div class="ab" style="left:52.69999999999999px;top:25.0px;width:52.39999999999998px;height:230.5px;background:#f2f2f2"></div>
<div class="ab" style="left:52.69999999999999px;top:13px;width:52.39999999999998px;height:12.0px;background:#fff"></div>
<div class="t" style="left:52.69999999999999px;width:52.39999999999998px;text-align:center;top:18.2px;font-size:4.8px;color:#444">6月5日 (金) 大安</div>
<div class="ab" style="left:105.09999999999997px;top:13px;width:52.39999999999998px;height:12.0px;background:#d5e6fa"></div>
<div class="t" style="left:105.09999999999997px;width:52.39999999999998px;text-align:center;top:18.2px;font-size:4.8px;color:#2a6cbf">6月6日 (土) 赤口</div>
<div class="ab" style="left:157.49999999999994px;top:13px;width:52.39999999999998px;height:12.0px;background:#fde3e6"></div>
<div class="t" style="left:157.49999999999994px;width:52.39999999999998px;text-align:center;top:18.2px;font-size:4.8px;color:#e0506a">6月7日 (日) 先勝</div>
<div class="ab" style="left:209.89999999999992px;top:13px;width:52.40000000000009px;height:12.0px;background:#fff"></div>
<div class="t" style="left:209.89999999999992px;width:52.40000000000009px;text-align:center;top:18.2px;font-size:4.8px;color:#444">6月8日 (月) 友引</div>
<div class="ab" style="left:262.3px;top:13px;width:52.39999999999998px;height:12.0px;background:#fff"></div>
<div class="t" style="left:262.3px;width:52.39999999999998px;text-align:center;top:18.2px;font-size:4.8px;color:#444">6月9日 (火) 先負</div>
<div class="ab" style="left:314.7px;top:13px;width:52.39999999999998px;height:12.0px;background:#fff"></div>
<div class="t" style="left:314.7px;width:52.39999999999998px;text-align:center;top:18.2px;font-size:4.8px;color:#444">6月10日 (水) 仏滅</div>
<div class="ab" style="left:367.09999999999997px;top:13px;width:51.80000000000007px;height:12.0px;background:#fff"></div>
<div class="t" style="left:367.09999999999997px;width:51.80000000000007px;text-align:center;top:18.2px;font-size:4.8px;color:#444">6月11日 (木) 大安</div>
<div class="ab" style="left:0;top:24.6px;width:419.3px;height:0.8px;background:#e0e0e0"></div>
<div class="ab" style="left:0;top:88.35px;width:419.3px;height:0.8px;background:#e2e2e2"></div>
<div class="ab" style="left:0;top:103.85px;width:419.3px;height:0.8px;background:#e2e2e2"></div>
<div class="ab" style="left:0;top:136.6px;width:419.3px;height:0.8px;background:#e2e2e2"></div>
<div class="ab" style="left:0;top:152.6px;width:419.3px;height:0.8px;background:#e2e2e2"></div>
<div class="ab" style="left:0;top:200.35px;width:419.3px;height:0.8px;background:#e2e2e2"></div>
<div class="ab" style="left:0;top:216.35px;width:419.3px;height:0.8px;background:#e2e2e2"></div>
<div class="ab" style="left:0;top:239.6px;width:419.3px;height:0.8px;background:#e2e2e2"></div>
<div class="ab" style="left:52.30px;top:13px;width:0.8px;height:242.5px;background:#e8e8e8"></div>
<div class="ab" style="left:104.70px;top:13px;width:0.8px;height:242.5px;background:#e8e8e8"></div>
<div class="ab" style="left:157.10px;top:13px;width:0.8px;height:242.5px;background:#e8e8e8"></div>
<div class="ab" style="left:209.50px;top:13px;width:0.8px;height:242.5px;background:#e8e8e8"></div>
<div class="ab" style="left:261.90px;top:13px;width:0.8px;height:242.5px;background:#e8e8e8"></div>
<div class="ab" style="left:314.30px;top:13px;width:0.8px;height:242.5px;background:#e8e8e8"></div>
<div class="ab" style="left:366.70px;top:13px;width:0.8px;height:242.5px;background:#e8e8e8"></div>
<div class="rt" style="left:3px;top:54.48px;color:#333">デモ　太郎</div>
<svg class="ab" style="left:95.69999999999996px;top:27.9px" width="7" height="6" viewBox="0 0 7 6"><path d="M4.2,0.8 L1.3,0.8 Q0.6,0.8 0.6,1.5 L0.6,4.5 Q0.6,5.2 1.3,5.2 L4.5,5.2 Q5.2,5.2 5.2,4.5 L5.2,3.2" fill="none" stroke="#444" stroke-width="0.7"/><path d="M2.6,4.1 L3,3 L5.9,0.3 L6.7,1.1 L3.8,3.8 Z" fill="#444"/></svg>
<svg class="ab" style="left:148.09999999999994px;top:27.9px" width="7" height="6" viewBox="0 0 7 6"><path d="M4.2,0.8 L1.3,0.8 Q0.6,0.8 0.6,1.5 L0.6,4.5 Q0.6,5.2 1.3,5.2 L4.5,5.2 Q5.2,5.2 5.2,4.5 L5.2,3.2" fill="none" stroke="#444" stroke-width="0.7"/><path d="M2.6,4.1 L3,3 L5.9,0.3 L6.7,1.1 L3.8,3.8 Z" fill="#444"/></svg>
<svg class="ab" style="left:200.49999999999991px;top:27.9px" width="7" height="6" viewBox="0 0 7 6"><path d="M4.2,0.8 L1.3,0.8 Q0.6,0.8 0.6,1.5 L0.6,4.5 Q0.6,5.2 1.3,5.2 L4.5,5.2 Q5.2,5.2 5.2,4.5 L5.2,3.2" fill="none" stroke="#444" stroke-width="0.7"/><path d="M2.6,4.1 L3,3 L5.9,0.3 L6.7,1.1 L3.8,3.8 Z" fill="#444"/></svg>
<svg class="ab" style="left:252.9px;top:27.9px" width="7" height="6" viewBox="0 0 7 6"><path d="M4.2,0.8 L1.3,0.8 Q0.6,0.8 0.6,1.5 L0.6,4.5 Q0.6,5.2 1.3,5.2 L4.5,5.2 Q5.2,5.2 5.2,4.5 L5.2,3.2" fill="none" stroke="#444" stroke-width="0.7"/><path d="M2.6,4.1 L3,3 L5.9,0.3 L6.7,1.1 L3.8,3.8 Z" fill="#444"/></svg>
<svg class="ab" style="left:305.3px;top:27.9px" width="7" height="6" viewBox="0 0 7 6"><path d="M4.2,0.8 L1.3,0.8 Q0.6,0.8 0.6,1.5 L0.6,4.5 Q0.6,5.2 1.3,5.2 L4.5,5.2 Q5.2,5.2 5.2,4.5 L5.2,3.2" fill="none" stroke="#444" stroke-width="0.7"/><path d="M2.6,4.1 L3,3 L5.9,0.3 L6.7,1.1 L3.8,3.8 Z" fill="#444"/></svg>
<svg class="ab" style="left:357.7px;top:27.9px" width="7" height="6" viewBox="0 0 7 6"><path d="M4.2,0.8 L1.3,0.8 Q0.6,0.8 0.6,1.5 L0.6,4.5 Q0.6,5.2 1.3,5.2 L4.5,5.2 Q5.2,5.2 5.2,4.5 L5.2,3.2" fill="none" stroke="#444" stroke-width="0.7"/><path d="M2.6,4.1 L3,3 L5.9,0.3 L6.7,1.1 L3.8,3.8 Z" fill="#444"/></svg>
<svg class="ab" style="left:409.50000000000006px;top:27.9px" width="7" height="6" viewBox="0 0 7 6"><path d="M4.2,0.8 L1.3,0.8 Q0.6,0.8 0.6,1.5 L0.6,4.5 Q0.6,5.2 1.3,5.2 L4.5,5.2 Q5.2,5.2 5.2,4.5 L5.2,3.2" fill="none" stroke="#444" stroke-width="0.7"/><path d="M2.6,4.1 L3,3 L5.9,0.3 L6.7,1.1 L3.8,3.8 Z" fill="#444"/></svg>
<div class="rt" style="left:3px;top:94.10px;color:#333">営業　太郎</div>
<svg class="ab" style="left:95.69999999999996px;top:91.65px" width="7" height="6" viewBox="0 0 7 6"><path d="M4.2,0.8 L1.3,0.8 Q0.6,0.8 0.6,1.5 L0.6,4.5 Q0.6,5.2 1.3,5.2 L4.5,5.2 Q5.2,5.2 5.2,4.5 L5.2,3.2" fill="none" stroke="#444" stroke-width="0.7"/><path d="M2.6,4.1 L3,3 L5.9,0.3 L6.7,1.1 L3.8,3.8 Z" fill="#444"/></svg>
<svg class="ab" style="left:148.09999999999994px;top:91.65px" width="7" height="6" viewBox="0 0 7 6"><path d="M4.2,0.8 L1.3,0.8 Q0.6,0.8 0.6,1.5 L0.6,4.5 Q0.6,5.2 1.3,5.2 L4.5,5.2 Q5.2,5.2 5.2,4.5 L5.2,3.2" fill="none" stroke="#444" stroke-width="0.7"/><path d="M2.6,4.1 L3,3 L5.9,0.3 L6.7,1.1 L3.8,3.8 Z" fill="#444"/></svg>
<svg class="ab" style="left:200.49999999999991px;top:91.65px" width="7" height="6" viewBox="0 0 7 6"><path d="M4.2,0.8 L1.3,0.8 Q0.6,0.8 0.6,1.5 L0.6,4.5 Q0.6,5.2 1.3,5.2 L4.5,5.2 Q5.2,5.2 5.2,4.5 L5.2,3.2" fill="none" stroke="#444" stroke-width="0.7"/><path d="M2.6,4.1 L3,3 L5.9,0.3 L6.7,1.1 L3.8,3.8 Z" fill="#444"/></svg>
<svg class="ab" style="left:252.9px;top:91.65px" width="7" height="6" viewBox="0 0 7 6"><path d="M4.2,0.8 L1.3,0.8 Q0.6,0.8 0.6,1.5 L0.6,4.5 Q0.6,5.2 1.3,5.2 L4.5,5.2 Q5.2,5.2 5.2,4.5 L5.2,3.2" fill="none" stroke="#444" stroke-width="0.7"/><path d="M2.6,4.1 L3,3 L5.9,0.3 L6.7,1.1 L3.8,3.8 Z" fill="#444"/></svg>
<svg class="ab" style="left:305.3px;top:91.65px" width="7" height="6" viewBox="0 0 7 6"><path d="M4.2,0.8 L1.3,0.8 Q0.6,0.8 0.6,1.5 L0.6,4.5 Q0.6,5.2 1.3,5.2 L4.5,5.2 Q5.2,5.2 5.2,4.5 L5.2,3.2" fill="none" stroke="#444" stroke-width="0.7"/><path d="M2.6,4.1 L3,3 L5.9,0.3 L6.7,1.1 L3.8,3.8 Z" fill="#444"/></svg>
<svg class="ab" style="left:357.7px;top:91.65px" width="7" height="6" viewBox="0 0 7 6"><path d="M4.2,0.8 L1.3,0.8 Q0.6,0.8 0.6,1.5 L0.6,4.5 Q0.6,5.2 1.3,5.2 L4.5,5.2 Q5.2,5.2 5.2,4.5 L5.2,3.2" fill="none" stroke="#444" stroke-width="0.7"/><path d="M2.6,4.1 L3,3 L5.9,0.3 L6.7,1.1 L3.8,3.8 Z" fill="#444"/></svg>
<svg class="ab" style="left:409.50000000000006px;top:91.65px" width="7" height="6" viewBox="0 0 7 6"><path d="M4.2,0.8 L1.3,0.8 Q0.6,0.8 0.6,1.5 L0.6,4.5 Q0.6,5.2 1.3,5.2 L4.5,5.2 Q5.2,5.2 5.2,4.5 L5.2,3.2" fill="none" stroke="#444" stroke-width="0.7"/><path d="M2.6,4.1 L3,3 L5.9,0.3 L6.7,1.1 L3.8,3.8 Z" fill="#444"/></svg>
<div class="rt" style="left:3px;top:118.22px;color:#333">三田　太郎</div>
<svg class="ab" style="left:95.69999999999996px;top:107.15px" width="7" height="6" viewBox="0 0 7 6"><path d="M4.2,0.8 L1.3,0.8 Q0.6,0.8 0.6,1.5 L0.6,4.5 Q0.6,5.2 1.3,5.2 L4.5,5.2 Q5.2,5.2 5.2,4.5 L5.2,3.2" fill="none" stroke="#444" stroke-width="0.7"/><path d="M2.6,4.1 L3,3 L5.9,0.3 L6.7,1.1 L3.8,3.8 Z" fill="#444"/></svg>
<svg class="ab" style="left:148.09999999999994px;top:107.15px" width="7" height="6" viewBox="0 0 7 6"><path d="M4.2,0.8 L1.3,0.8 Q0.6,0.8 0.6,1.5 L0.6,4.5 Q0.6,5.2 1.3,5.2 L4.5,5.2 Q5.2,5.2 5.2,4.5 L5.2,3.2" fill="none" stroke="#444" stroke-width="0.7"/><path d="M2.6,4.1 L3,3 L5.9,0.3 L6.7,1.1 L3.8,3.8 Z" fill="#444"/></svg>
<svg class="ab" style="left:200.49999999999991px;top:107.15px" width="7" height="6" viewBox="0 0 7 6"><path d="M4.2,0.8 L1.3,0.8 Q0.6,0.8 0.6,1.5 L0.6,4.5 Q0.6,5.2 1.3,5.2 L4.5,5.2 Q5.2,5.2 5.2,4.5 L5.2,3.2" fill="none" stroke="#444" stroke-width="0.7"/><path d="M2.6,4.1 L3,3 L5.9,0.3 L6.7,1.1 L3.8,3.8 Z" fill="#444"/></svg>
<svg class="ab" style="left:252.9px;top:107.15px" width="7" height="6" viewBox="0 0 7 6"><path d="M4.2,0.8 L1.3,0.8 Q0.6,0.8 0.6,1.5 L0.6,4.5 Q0.6,5.2 1.3,5.2 L4.5,5.2 Q5.2,5.2 5.2,4.5 L5.2,3.2" fill="none" stroke="#444" stroke-width="0.7"/><path d="M2.6,4.1 L3,3 L5.9,0.3 L6.7,1.1 L3.8,3.8 Z" fill="#444"/></svg>
<svg class="ab" style="left:305.3px;top:107.15px" width="7" height="6" viewBox="0 0 7 6"><path d="M4.2,0.8 L1.3,0.8 Q0.6,0.8 0.6,1.5 L0.6,4.5 Q0.6,5.2 1.3,5.2 L4.5,5.2 Q5.2,5.2 5.2,4.5 L5.2,3.2" fill="none" stroke="#444" stroke-width="0.7"/><path d="M2.6,4.1 L3,3 L5.9,0.3 L6.7,1.1 L3.8,3.8 Z" fill="#444"/></svg>
<svg class="ab" style="left:357.7px;top:107.15px" width="7" height="6" viewBox="0 0 7 6"><path d="M4.2,0.8 L1.3,0.8 Q0.6,0.8 0.6,1.5 L0.6,4.5 Q0.6,5.2 1.3,5.2 L4.5,5.2 Q5.2,5.2 5.2,4.5 L5.2,3.2" fill="none" stroke="#444" stroke-width="0.7"/><path d="M2.6,4.1 L3,3 L5.9,0.3 L6.7,1.1 L3.8,3.8 Z" fill="#444"/></svg>
<svg class="ab" style="left:409.50000000000006px;top:107.15px" width="7" height="6" viewBox="0 0 7 6"><path d="M4.2,0.8 L1.3,0.8 Q0.6,0.8 0.6,1.5 L0.6,4.5 Q0.6,5.2 1.3,5.2 L4.5,5.2 Q5.2,5.2 5.2,4.5 L5.2,3.2" fill="none" stroke="#444" stroke-width="0.7"/><path d="M2.6,4.1 L3,3 L5.9,0.3 L6.7,1.1 L3.8,3.8 Z" fill="#444"/></svg>
<div class="rt" style="left:3px;top:142.60px;color:#333">守安 長義</div>
<svg class="ab" style="left:95.69999999999996px;top:139.9px" width="7" height="6" viewBox="0 0 7 6"><path d="M4.2,0.8 L1.3,0.8 Q0.6,0.8 0.6,1.5 L0.6,4.5 Q0.6,5.2 1.3,5.2 L4.5,5.2 Q5.2,5.2 5.2,4.5 L5.2,3.2" fill="none" stroke="#444" stroke-width="0.7"/><path d="M2.6,4.1 L3,3 L5.9,0.3 L6.7,1.1 L3.8,3.8 Z" fill="#444"/></svg>
<svg class="ab" style="left:148.09999999999994px;top:139.9px" width="7" height="6" viewBox="0 0 7 6"><path d="M4.2,0.8 L1.3,0.8 Q0.6,0.8 0.6,1.5 L0.6,4.5 Q0.6,5.2 1.3,5.2 L4.5,5.2 Q5.2,5.2 5.2,4.5 L5.2,3.2" fill="none" stroke="#444" stroke-width="0.7"/><path d="M2.6,4.1 L3,3 L5.9,0.3 L6.7,1.1 L3.8,3.8 Z" fill="#444"/></svg>
<svg class="ab" style="left:200.49999999999991px;top:139.9px" width="7" height="6" viewBox="0 0 7 6"><path d="M4.2,0.8 L1.3,0.8 Q0.6,0.8 0.6,1.5 L0.6,4.5 Q0.6,5.2 1.3,5.2 L4.5,5.2 Q5.2,5.2 5.2,4.5 L5.2,3.2" fill="none" stroke="#444" stroke-width="0.7"/><path d="M2.6,4.1 L3,3 L5.9,0.3 L6.7,1.1 L3.8,3.8 Z" fill="#444"/></svg>
<svg class="ab" style="left:252.9px;top:139.9px" width="7" height="6" viewBox="0 0 7 6"><path d="M4.2,0.8 L1.3,0.8 Q0.6,0.8 0.6,1.5 L0.6,4.5 Q0.6,5.2 1.3,5.2 L4.5,5.2 Q5.2,5.2 5.2,4.5 L5.2,3.2" fill="none" stroke="#444" stroke-width="0.7"/><path d="M2.6,4.1 L3,3 L5.9,0.3 L6.7,1.1 L3.8,3.8 Z" fill="#444"/></svg>
<svg class="ab" style="left:305.3px;top:139.9px" width="7" height="6" viewBox="0 0 7 6"><path d="M4.2,0.8 L1.3,0.8 Q0.6,0.8 0.6,1.5 L0.6,4.5 Q0.6,5.2 1.3,5.2 L4.5,5.2 Q5.2,5.2 5.2,4.5 L5.2,3.2" fill="none" stroke="#444" stroke-width="0.7"/><path d="M2.6,4.1 L3,3 L5.9,0.3 L6.7,1.1 L3.8,3.8 Z" fill="#444"/></svg>
<svg class="ab" style="left:357.7px;top:139.9px" width="7" height="6" viewBox="0 0 7 6"><path d="M4.2,0.8 L1.3,0.8 Q0.6,0.8 0.6,1.5 L0.6,4.5 Q0.6,5.2 1.3,5.2 L4.5,5.2 Q5.2,5.2 5.2,4.5 L5.2,3.2" fill="none" stroke="#444" stroke-width="0.7"/><path d="M2.6,4.1 L3,3 L5.9,0.3 L6.7,1.1 L3.8,3.8 Z" fill="#444"/></svg>
<svg class="ab" style="left:409.50000000000006px;top:139.9px" width="7" height="6" viewBox="0 0 7 6"><path d="M4.2,0.8 L1.3,0.8 Q0.6,0.8 0.6,1.5 L0.6,4.5 Q0.6,5.2 1.3,5.2 L4.5,5.2 Q5.2,5.2 5.2,4.5 L5.2,3.2" fill="none" stroke="#444" stroke-width="0.7"/><path d="M2.6,4.1 L3,3 L5.9,0.3 L6.7,1.1 L3.8,3.8 Z" fill="#444"/></svg>
<div class="rt" style="left:3px;top:174.47px;color:#333">大門　太郎</div>
<svg class="ab" style="left:95.69999999999996px;top:155.9px" width="7" height="6" viewBox="0 0 7 6"><path d="M4.2,0.8 L1.3,0.8 Q0.6,0.8 0.6,1.5 L0.6,4.5 Q0.6,5.2 1.3,5.2 L4.5,5.2 Q5.2,5.2 5.2,4.5 L5.2,3.2" fill="none" stroke="#444" stroke-width="0.7"/><path d="M2.6,4.1 L3,3 L5.9,0.3 L6.7,1.1 L3.8,3.8 Z" fill="#444"/></svg>
<svg class="ab" style="left:148.09999999999994px;top:155.9px" width="7" height="6" viewBox="0 0 7 6"><path d="M4.2,0.8 L1.3,0.8 Q0.6,0.8 0.6,1.5 L0.6,4.5 Q0.6,5.2 1.3,5.2 L4.5,5.2 Q5.2,5.2 5.2,4.5 L5.2,3.2" fill="none" stroke="#444" stroke-width="0.7"/><path d="M2.6,4.1 L3,3 L5.9,0.3 L6.7,1.1 L3.8,3.8 Z" fill="#444"/></svg>
<svg class="ab" style="left:200.49999999999991px;top:155.9px" width="7" height="6" viewBox="0 0 7 6"><path d="M4.2,0.8 L1.3,0.8 Q0.6,0.8 0.6,1.5 L0.6,4.5 Q0.6,5.2 1.3,5.2 L4.5,5.2 Q5.2,5.2 5.2,4.5 L5.2,3.2" fill="none" stroke="#444" stroke-width="0.7"/><path d="M2.6,4.1 L3,3 L5.9,0.3 L6.7,1.1 L3.8,3.8 Z" fill="#444"/></svg>
<svg class="ab" style="left:252.9px;top:155.9px" width="7" height="6" viewBox="0 0 7 6"><path d="M4.2,0.8 L1.3,0.8 Q0.6,0.8 0.6,1.5 L0.6,4.5 Q0.6,5.2 1.3,5.2 L4.5,5.2 Q5.2,5.2 5.2,4.5 L5.2,3.2" fill="none" stroke="#444" stroke-width="0.7"/><path d="M2.6,4.1 L3,3 L5.9,0.3 L6.7,1.1 L3.8,3.8 Z" fill="#444"/></svg>
<svg class="ab" style="left:305.3px;top:155.9px" width="7" height="6" viewBox="0 0 7 6"><path d="M4.2,0.8 L1.3,0.8 Q0.6,0.8 0.6,1.5 L0.6,4.5 Q0.6,5.2 1.3,5.2 L4.5,5.2 Q5.2,5.2 5.2,4.5 L5.2,3.2" fill="none" stroke="#444" stroke-width="0.7"/><path d="M2.6,4.1 L3,3 L5.9,0.3 L6.7,1.1 L3.8,3.8 Z" fill="#444"/></svg>
<svg class="ab" style="left:357.7px;top:155.9px" width="7" height="6" viewBox="0 0 7 6"><path d="M4.2,0.8 L1.3,0.8 Q0.6,0.8 0.6,1.5 L0.6,4.5 Q0.6,5.2 1.3,5.2 L4.5,5.2 Q5.2,5.2 5.2,4.5 L5.2,3.2" fill="none" stroke="#444" stroke-width="0.7"/><path d="M2.6,4.1 L3,3 L5.9,0.3 L6.7,1.1 L3.8,3.8 Z" fill="#444"/></svg>
<svg class="ab" style="left:409.50000000000006px;top:155.9px" width="7" height="6" viewBox="0 0 7 6"><path d="M4.2,0.8 L1.3,0.8 Q0.6,0.8 0.6,1.5 L0.6,4.5 Q0.6,5.2 1.3,5.2 L4.5,5.2 Q5.2,5.2 5.2,4.5 L5.2,3.2" fill="none" stroke="#444" stroke-width="0.7"/><path d="M2.6,4.1 L3,3 L5.9,0.3 L6.7,1.1 L3.8,3.8 Z" fill="#444"/></svg>
<div class="rt" style="left:3px;top:206.35px;color:#333">武井　太郎</div>
<svg class="ab" style="left:95.69999999999996px;top:203.65px" width="7" height="6" viewBox="0 0 7 6"><path d="M4.2,0.8 L1.3,0.8 Q0.6,0.8 0.6,1.5 L0.6,4.5 Q0.6,5.2 1.3,5.2 L4.5,5.2 Q5.2,5.2 5.2,4.5 L5.2,3.2" fill="none" stroke="#444" stroke-width="0.7"/><path d="M2.6,4.1 L3,3 L5.9,0.3 L6.7,1.1 L3.8,3.8 Z" fill="#444"/></svg>
<svg class="ab" style="left:148.09999999999994px;top:203.65px" width="7" height="6" viewBox="0 0 7 6"><path d="M4.2,0.8 L1.3,0.8 Q0.6,0.8 0.6,1.5 L0.6,4.5 Q0.6,5.2 1.3,5.2 L4.5,5.2 Q5.2,5.2 5.2,4.5 L5.2,3.2" fill="none" stroke="#444" stroke-width="0.7"/><path d="M2.6,4.1 L3,3 L5.9,0.3 L6.7,1.1 L3.8,3.8 Z" fill="#444"/></svg>
<svg class="ab" style="left:200.49999999999991px;top:203.65px" width="7" height="6" viewBox="0 0 7 6"><path d="M4.2,0.8 L1.3,0.8 Q0.6,0.8 0.6,1.5 L0.6,4.5 Q0.6,5.2 1.3,5.2 L4.5,5.2 Q5.2,5.2 5.2,4.5 L5.2,3.2" fill="none" stroke="#444" stroke-width="0.7"/><path d="M2.6,4.1 L3,3 L5.9,0.3 L6.7,1.1 L3.8,3.8 Z" fill="#444"/></svg>
<svg class="ab" style="left:252.9px;top:203.65px" width="7" height="6" viewBox="0 0 7 6"><path d="M4.2,0.8 L1.3,0.8 Q0.6,0.8 0.6,1.5 L0.6,4.5 Q0.6,5.2 1.3,5.2 L4.5,5.2 Q5.2,5.2 5.2,4.5 L5.2,3.2" fill="none" stroke="#444" stroke-width="0.7"/><path d="M2.6,4.1 L3,3 L5.9,0.3 L6.7,1.1 L3.8,3.8 Z" fill="#444"/></svg>
<svg class="ab" style="left:305.3px;top:203.65px" width="7" height="6" viewBox="0 0 7 6"><path d="M4.2,0.8 L1.3,0.8 Q0.6,0.8 0.6,1.5 L0.6,4.5 Q0.6,5.2 1.3,5.2 L4.5,5.2 Q5.2,5.2 5.2,4.5 L5.2,3.2" fill="none" stroke="#444" stroke-width="0.7"/><path d="M2.6,4.1 L3,3 L5.9,0.3 L6.7,1.1 L3.8,3.8 Z" fill="#444"/></svg>
<svg class="ab" style="left:357.7px;top:203.65px" width="7" height="6" viewBox="0 0 7 6"><path d="M4.2,0.8 L1.3,0.8 Q0.6,0.8 0.6,1.5 L0.6,4.5 Q0.6,5.2 1.3,5.2 L4.5,5.2 Q5.2,5.2 5.2,4.5 L5.2,3.2" fill="none" stroke="#444" stroke-width="0.7"/><path d="M2.6,4.1 L3,3 L5.9,0.3 L6.7,1.1 L3.8,3.8 Z" fill="#444"/></svg>
<svg class="ab" style="left:409.50000000000006px;top:203.65px" width="7" height="6" viewBox="0 0 7 6"><path d="M4.2,0.8 L1.3,0.8 Q0.6,0.8 0.6,1.5 L0.6,4.5 Q0.6,5.2 1.3,5.2 L4.5,5.2 Q5.2,5.2 5.2,4.5 L5.2,3.2" fill="none" stroke="#444" stroke-width="0.7"/><path d="M2.6,4.1 L3,3 L5.9,0.3 L6.7,1.1 L3.8,3.8 Z" fill="#444"/></svg>
<div class="rt" style="left:3px;top:225.97px;color:#333">青島　太郎</div>
<svg class="ab" style="left:95.69999999999996px;top:219.65px" width="7" height="6" viewBox="0 0 7 6"><path d="M4.2,0.8 L1.3,0.8 Q0.6,0.8 0.6,1.5 L0.6,4.5 Q0.6,5.2 1.3,5.2 L4.5,5.2 Q5.2,5.2 5.2,4.5 L5.2,3.2" fill="none" stroke="#444" stroke-width="0.7"/><path d="M2.6,4.1 L3,3 L5.9,0.3 L6.7,1.1 L3.8,3.8 Z" fill="#444"/></svg>
<svg class="ab" style="left:148.09999999999994px;top:219.65px" width="7" height="6" viewBox="0 0 7 6"><path d="M4.2,0.8 L1.3,0.8 Q0.6,0.8 0.6,1.5 L0.6,4.5 Q0.6,5.2 1.3,5.2 L4.5,5.2 Q5.2,5.2 5.2,4.5 L5.2,3.2" fill="none" stroke="#444" stroke-width="0.7"/><path d="M2.6,4.1 L3,3 L5.9,0.3 L6.7,1.1 L3.8,3.8 Z" fill="#444"/></svg>
<svg class="ab" style="left:200.49999999999991px;top:219.65px" width="7" height="6" viewBox="0 0 7 6"><path d="M4.2,0.8 L1.3,0.8 Q0.6,0.8 0.6,1.5 L0.6,4.5 Q0.6,5.2 1.3,5.2 L4.5,5.2 Q5.2,5.2 5.2,4.5 L5.2,3.2" fill="none" stroke="#444" stroke-width="0.7"/><path d="M2.6,4.1 L3,3 L5.9,0.3 L6.7,1.1 L3.8,3.8 Z" fill="#444"/></svg>
<svg class="ab" style="left:252.9px;top:219.65px" width="7" height="6" viewBox="0 0 7 6"><path d="M4.2,0.8 L1.3,0.8 Q0.6,0.8 0.6,1.5 L0.6,4.5 Q0.6,5.2 1.3,5.2 L4.5,5.2 Q5.2,5.2 5.2,4.5 L5.2,3.2" fill="none" stroke="#444" stroke-width="0.7"/><path d="M2.6,4.1 L3,3 L5.9,0.3 L6.7,1.1 L3.8,3.8 Z" fill="#444"/></svg>
<svg class="ab" style="left:305.3px;top:219.65px" width="7" height="6" viewBox="0 0 7 6"><path d="M4.2,0.8 L1.3,0.8 Q0.6,0.8 0.6,1.5 L0.6,4.5 Q0.6,5.2 1.3,5.2 L4.5,5.2 Q5.2,5.2 5.2,4.5 L5.2,3.2" fill="none" stroke="#444" stroke-width="0.7"/><path d="M2.6,4.1 L3,3 L5.9,0.3 L6.7,1.1 L3.8,3.8 Z" fill="#444"/></svg>
<svg class="ab" style="left:357.7px;top:219.65px" width="7" height="6" viewBox="0 0 7 6"><path d="M4.2,0.8 L1.3,0.8 Q0.6,0.8 0.6,1.5 L0.6,4.5 Q0.6,5.2 1.3,5.2 L4.5,5.2 Q5.2,5.2 5.2,4.5 L5.2,3.2" fill="none" stroke="#444" stroke-width="0.7"/><path d="M2.6,4.1 L3,3 L5.9,0.3 L6.7,1.1 L3.8,3.8 Z" fill="#444"/></svg>
<svg class="ab" style="left:409.50000000000006px;top:219.65px" width="7" height="6" viewBox="0 0 7 6"><path d="M4.2,0.8 L1.3,0.8 Q0.6,0.8 0.6,1.5 L0.6,4.5 Q0.6,5.2 1.3,5.2 L4.5,5.2 Q5.2,5.2 5.2,4.5 L5.2,3.2" fill="none" stroke="#444" stroke-width="0.7"/><path d="M2.6,4.1 L3,3 L5.9,0.3 L6.7,1.1 L3.8,3.8 Z" fill="#444"/></svg>
<div class="rt" style="left:3px;top:245.35px;color:#333">営業　京子</div>
<svg class="ab" style="left:95.69999999999996px;top:242.9px" width="7" height="6" viewBox="0 0 7 6"><path d="M4.2,0.8 L1.3,0.8 Q0.6,0.8 0.6,1.5 L0.6,4.5 Q0.6,5.2 1.3,5.2 L4.5,5.2 Q5.2,5.2 5.2,4.5 L5.2,3.2" fill="none" stroke="#444" stroke-width="0.7"/><path d="M2.6,4.1 L3,3 L5.9,0.3 L6.7,1.1 L3.8,3.8 Z" fill="#444"/></svg>
<svg class="ab" style="left:148.09999999999994px;top:242.9px" width="7" height="6" viewBox="0 0 7 6"><path d="M4.2,0.8 L1.3,0.8 Q0.6,0.8 0.6,1.5 L0.6,4.5 Q0.6,5.2 1.3,5.2 L4.5,5.2 Q5.2,5.2 5.2,4.5 L5.2,3.2" fill="none" stroke="#444" stroke-width="0.7"/><path d="M2.6,4.1 L3,3 L5.9,0.3 L6.7,1.1 L3.8,3.8 Z" fill="#444"/></svg>
<svg class="ab" style="left:200.49999999999991px;top:242.9px" width="7" height="6" viewBox="0 0 7 6"><path d="M4.2,0.8 L1.3,0.8 Q0.6,0.8 0.6,1.5 L0.6,4.5 Q0.6,5.2 1.3,5.2 L4.5,5.2 Q5.2,5.2 5.2,4.5 L5.2,3.2" fill="none" stroke="#444" stroke-width="0.7"/><path d="M2.6,4.1 L3,3 L5.9,0.3 L6.7,1.1 L3.8,3.8 Z" fill="#444"/></svg>
<svg class="ab" style="left:252.9px;top:242.9px" width="7" height="6" viewBox="0 0 7 6"><path d="M4.2,0.8 L1.3,0.8 Q0.6,0.8 0.6,1.5 L0.6,4.5 Q0.6,5.2 1.3,5.2 L4.5,5.2 Q5.2,5.2 5.2,4.5 L5.2,3.2" fill="none" stroke="#444" stroke-width="0.7"/><path d="M2.6,4.1 L3,3 L5.9,0.3 L6.7,1.1 L3.8,3.8 Z" fill="#444"/></svg>
<svg class="ab" style="left:305.3px;top:242.9px" width="7" height="6" viewBox="0 0 7 6"><path d="M4.2,0.8 L1.3,0.8 Q0.6,0.8 0.6,1.5 L0.6,4.5 Q0.6,5.2 1.3,5.2 L4.5,5.2 Q5.2,5.2 5.2,4.5 L5.2,3.2" fill="none" stroke="#444" stroke-width="0.7"/><path d="M2.6,4.1 L3,3 L5.9,0.3 L6.7,1.1 L3.8,3.8 Z" fill="#444"/></svg>
<svg class="ab" style="left:357.7px;top:242.9px" width="7" height="6" viewBox="0 0 7 6"><path d="M4.2,0.8 L1.3,0.8 Q0.6,0.8 0.6,1.5 L0.6,4.5 Q0.6,5.2 1.3,5.2 L4.5,5.2 Q5.2,5.2 5.2,4.5 L5.2,3.2" fill="none" stroke="#444" stroke-width="0.7"/><path d="M2.6,4.1 L3,3 L5.9,0.3 L6.7,1.1 L3.8,3.8 Z" fill="#444"/></svg>
<svg class="ab" style="left:409.50000000000006px;top:242.9px" width="7" height="6" viewBox="0 0 7 6"><path d="M4.2,0.8 L1.3,0.8 Q0.6,0.8 0.6,1.5 L0.6,4.5 Q0.6,5.2 1.3,5.2 L4.5,5.2 Q5.2,5.2 5.2,4.5 L5.2,3.2" fill="none" stroke="#444" stroke-width="0.7"/><path d="M2.6,4.1 L3,3 L5.9,0.3 L6.7,1.1 L3.8,3.8 Z" fill="#444"/></svg>
<div class="ev" style="left:315.30px;top:34.30px;width:50.20px;height:6.80px;background:#fcd3d6;color:#5a4040;padding:1.5px 0 0 3.3px">大阪出張</div>
<div class="ev" style="left:315.30px;top:43.10px;width:50.20px;height:13.40px;background:#e0e6fa;color:#3c3c3c;padding:2.0px 0 0 3.3px"><b style="color:#5a5a5a">10:00 – 12:00</b><div style="margin-top:1.6px">打合せ</div></div>
<div class="ev" style="left:315.30px;top:58.70px;width:50.20px;height:13.10px;background:#fcd3d6;color:#3c3c3c;padding:2.0px 0 0 3.3px"><b style="color:#5a5a5a">15:00 – 17:00</b><div style="margin-top:1.6px">なんば支店訪問</div></div>
<div class="ev" style="left:367.70px;top:34.30px;width:49.60px;height:6.80px;background:#fcd5aa;color:#3c3c3c;padding:1.5px 0 0 3.3px">提案書作成</div>
<div class="ev" style="left:367.70px;top:43.10px;width:49.60px;height:13.40px;background:#cddcec;color:#3c3c3c;padding:2.0px 0 0 3.3px"><b style="color:#5a5a5a">09:00 – 10:00</b><div style="margin-top:1.6px">新人研修</div></div>
<div class="ev" style="left:367.70px;top:58.70px;width:49.60px;height:13.10px;background:#cddcec;color:#3c3c3c;padding:2.0px 0 0 3.3px"><b style="color:#5a5a5a">13:00 – 15:00</b><div style="margin-top:1.6px">ABC社来社</div></div>
<div class="ev" style="left:367.70px;top:74.00px;width:49.60px;height:13.10px;background:#fcd5aa;color:#3c3c3c;padding:2.0px 0 0 3.3px"><b style="color:#5a5a5a">13:00 – 15:00</b><div style="margin-top:1.6px">社内作業</div></div>
<div class="ev" style="left:53.30px;top:113.70px;width:50.20px;height:13.00px;background:#d8d8d8;color:#777;padding:2.0px 0 0 3.3px"><b style="color:#888">18:30 – 21:00</b><div style="margin-top:1.6px">[予定あり]</div></div>
<div class="ev" style="left:315.30px;top:113.70px;width:50.20px;height:13.00px;background:#e0e6fa;color:#3c3c3c;padding:2.0px 0 0 3.3px"><b style="color:#5a5a5a">10:00 – 12:00</b><div style="margin-top:1.6px">打合せ</div></div>
<div class="ev" style="left:367.70px;top:113.30px;width:49.60px;height:6.70px;background:#3cc6c6;color:#fff;padding:1.5px 0 0 3.3px"><b style="display:inline;font-size:5.2px;color:#fff;letter-spacing:0">●朝礼当番</b></div>
<div class="ev" style="left:367.70px;top:122.00px;width:49.60px;height:13.70px;background:#cddcec;color:#3c3c3c;padding:2.0px 0 0 3.3px"><b style="color:#5a5a5a">13:00 – 15:00</b><div style="margin-top:1.6px">ABC社来社</div></div>
<div class="ev" style="left:315.30px;top:162.00px;width:50.20px;height:6.70px;background:#fcd3d6;color:#5a4040;padding:1.5px 0 0 3.3px">大阪出張</div>
<div class="ev" style="left:315.30px;top:170.70px;width:50.20px;height:13.80px;background:#e0e6fa;color:#3c3c3c;padding:2.0px 0 0 3.3px"><b style="color:#5a5a5a">10:00 – 12:00</b><div style="margin-top:1.6px">打合せ</div></div>
<div class="ev" style="left:315.30px;top:186.20px;width:50.20px;height:13.80px;background:#fcd3d6;color:#3c3c3c;padding:2.0px 0 0 3.3px"><b style="color:#5a5a5a">15:00 – 17:00</b><div style="margin-top:1.6px">なんば支店訪問</div></div>
<div class="ev" style="left:367.70px;top:162.00px;width:49.60px;height:13.50px;background:#cddcec;color:#3c3c3c;padding:2.0px 0 0 3.3px"><b style="color:#5a5a5a">13:00 – 15:00</b><div style="margin-top:1.6px">ABC社来社</div></div>
<div class="ev" style="left:315.30px;top:225.70px;width:50.20px;height:13.80px;background:#e0e6fa;color:#3c3c3c;padding:2.0px 0 0 3.3px"><b style="color:#5a5a5a">10:00 – 12:00</b><div style="margin-top:1.6px">打合せ</div></div>
<div class="ev" style="left:367.70px;top:225.70px;width:49.60px;height:13.80px;background:#cddcec;color:#3c3c3c;padding:2.0px 0 0 3.3px"><b style="color:#5a5a5a">13:00 – 15:00</b><div style="margin-top:1.6px">ABC社来社</div></div>
</div>
<div class="panel" style="left:429.7px;top:362.6px;width:419.3px;height:70px">
<div class="ph" style="height:13.3px;border-bottom:none"></div>
<div class="bar" style="left:18.8px;top:0;height:13.3px"></div>
<svg class="ab" style="left:5.6px;top:3.5px" width="9" height="8" viewBox="0 0 16 14"><rect x="0.5" y="1.8" width="15" height="11" fill="#e6ecf2" stroke="#9aabc0" stroke-width="0.6"/><rect x="2.5" y="4.5" width="11" height="6" fill="#c8d0d8"/><path d="M3.5,6 L9,6 M3.5,8 L9,8 M10,6 L12.5,6 M10,8 L12.5,8" stroke="#a0aab4" stroke-width="0.6"/></svg>
<div class="ptitle" style="left:24.6px;top:4.5px"><span style="font-size:6.2px">web</span>リンク</div>
<svg class="ab" style="left:398.6px;top:4px" width="6" height="6" viewBox="0 0 6 6"><path d="M2.74,0.31 L3.26,0.31 L3.65,0.85 L4.06,1.02 L4.71,0.91 L5.09,1.29 L4.98,1.94 L5.15,2.35 L5.69,2.74 L5.69,3.26 L5.15,3.65 L4.98,4.06 L5.09,4.71 L4.71,5.09 L4.06,4.98 L3.65,5.15 L3.26,5.69 L2.74,5.69 L2.35,5.15 L1.94,4.98 L1.29,5.09 L0.91,4.71 L1.02,4.06 L0.85,3.65 L0.31,3.26 L0.31,2.74 L0.85,2.35 L1.02,1.94 L0.91,1.29 L1.29,0.91 L1.94,1.02 L2.35,0.85 Z" fill="#2a2a2a"/><circle cx="3" cy="3" r="2.2" fill="#2a2a2a"/><circle cx="3" cy="3" r="0.8" fill="#fafafa"/></svg>
<svg class="ab" style="left:409.1px;top:4px" width="6" height="6" viewBox="0 0 6 6"><path d="M4.8,2 A2,2 0 0 0 1.1,2.4 M1.2,4 A2,2 0 0 0 4.9,3.6" fill="none" stroke="#333" stroke-width="0.9"/><path d="M5.3,0.8 L5.3,2.6 L3.5,2.6 Z M0.7,5.2 L0.7,3.4 L2.5,3.4 Z" fill="#333"/></svg>
<div class="ab" style="left:0;top:13.3px;width:418.5px;height:7.9px;background:#fff;border-bottom:0.8px solid #e6e6e6"></div>
<div class="rt" style="left:360.6px;top:15.3px;color:#2a6cbf;font-size:4.6px">全て閉じる　全て展開する</div>
<svg class="ab" style="left:2.5px;top:24.5px" width="6" height="6" viewBox="0 0 6 6"><rect x="0.5" y="1" width="4.5" height="4" fill="#dde" stroke="#aab" stroke-width="0.4"/></svg>
<div class="rt" style="left:11.1px;top:25.3px;color:#444;font-size:5.2px">[共通リンク]</div>
<div class="ab" style="left:12px;top:31.5px;width:0.5px;height:15px;background:#bbb"></div>
<div class="rt" style="left:12.1px;top:34.9px;color:#2a6cbf;font-size:5.1px">-アイアットOEC</div>
<div class="rt" style="left:12.1px;top:43.4px;color:#2a6cbf;font-size:5.1px">-グループウェアASPならWaWaOffice</div>
<div class="ab" style="left:9.1px;top:52.8px;width:4px;height:4px;border-radius:0.8px;background:#333"></div>
<div class="rt" style="left:18.6px;top:52.6px;color:#555;font-size:5.1px">BCP</div>
</div>
<script>
(function(){
var t=document.createElement('span');
t.style.cssText='position:absolute;left:0;top:0;font-size:100px;line-height:1;white-space:nowrap;visibility:hidden';
t.textContent='未読の掲示が';
document.body.appendChild(t);
var w=t.getBoundingClientRect().width/600;
document.body.removeChild(t);
if(!(w>0)||w>0.93)return;
var extra=(1-w).toFixed(3)+'em';
var re=/[　-ヿ一-鿿！-～‘-”「」【】]+/g;
var wk=document.createTreeWalker(document.body,NodeFilter.SHOW_TEXT,null,false);
var nodes=[];while(wk.nextNode())nodes.push(wk.currentNode);
for(var i=0;i<nodes.length;i++){
 var n=nodes[i],s=n.nodeValue;re.lastIndex=0;
 if(!re.test(s))continue;re.lastIndex=0;
 var f=document.createDocumentFragment(),last=0,m;
 while((m=re.exec(s))){
  if(m.index>last)f.appendChild(document.createTextNode(s.slice(last,m.index)));
  var sp=document.createElement('span');var ps=getComputedStyle(n.parentNode);var ls=parseFloat(ps.letterSpacing)||0;var fs=parseFloat(ps.fontSize)||5;sp.style.letterSpacing=(ls+(1-w)*fs).toFixed(3)+'px';sp.style.webkitTextStrokeWidth='0.3px';sp.textContent=m[0];f.appendChild(sp);
  last=m.index+m[0].length;
 }
 if(last<s.length)f.appendChild(document.createTextNode(s.slice(last)));
 n.parentNode.replaceChild(f,n);
}
})();
</script>
</body></html>
